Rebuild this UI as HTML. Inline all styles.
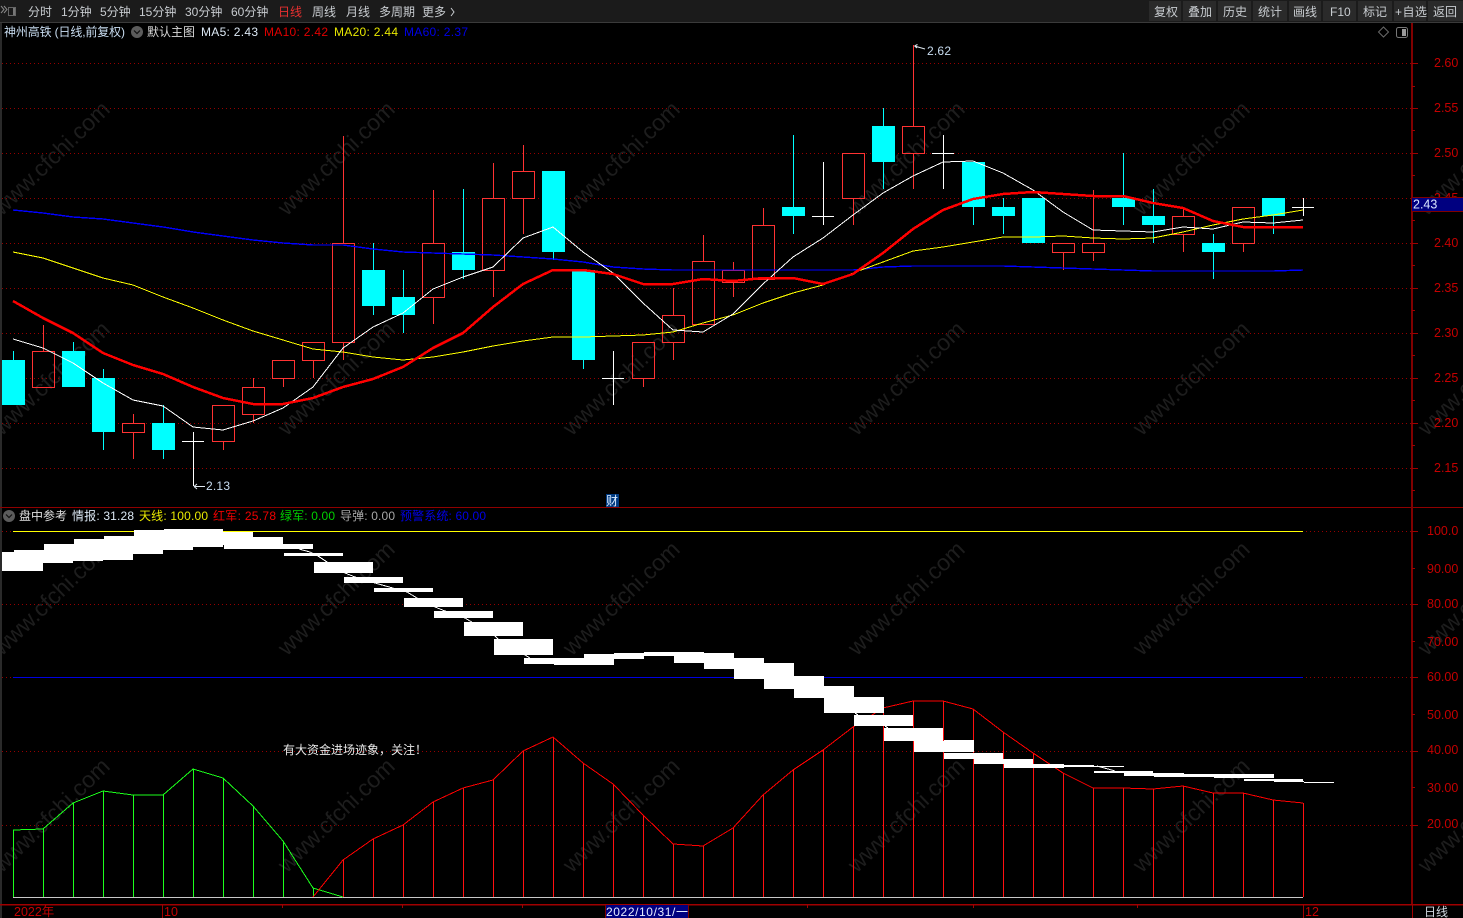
<!DOCTYPE html>
<html lang="zh">
<head>
<meta charset="utf-8">
<title>神州高铁</title>
<style>
html,body{margin:0;padding:0;background:#000;width:1463px;height:918px;overflow:hidden}
svg{display:block;position:absolute;left:0;top:0}
text{font-family:"Liberation Sans","Noto Sans CJK SC",sans-serif;font-size:12px;white-space:pre}
.wm text{font-size:23px;fill:#1d1d1d;text-anchor:middle}
.ax text{fill:#c40000;font-size:12.5px}
.crisp{shape-rendering:crispEdges}
</style>
</head>
<body>
<svg width="1463" height="918" viewBox="0 0 1463 918" xmlns="http://www.w3.org/2000/svg">
<rect width="1463" height="918" fill="#000"/>

<!-- watermark -->
<g class="wm">
<text transform="translate(51,158) rotate(-44)" y="8">www.cfchi.com</text>
<text transform="translate(336,158) rotate(-44)" y="8">www.cfchi.com</text>
<text transform="translate(621,158) rotate(-44)" y="8">www.cfchi.com</text>
<text transform="translate(906,158) rotate(-44)" y="8">www.cfchi.com</text>
<text transform="translate(1191,158) rotate(-44)" y="8">www.cfchi.com</text>
<text transform="translate(1476,158) rotate(-44)" y="8">www.cfchi.com</text>
<text transform="translate(51,378) rotate(-44)" y="8">www.cfchi.com</text>
<text transform="translate(336,378) rotate(-44)" y="8">www.cfchi.com</text>
<text transform="translate(621,378) rotate(-44)" y="8">www.cfchi.com</text>
<text transform="translate(906,378) rotate(-44)" y="8">www.cfchi.com</text>
<text transform="translate(1191,378) rotate(-44)" y="8">www.cfchi.com</text>
<text transform="translate(1476,378) rotate(-44)" y="8">www.cfchi.com</text>
<text transform="translate(51,598) rotate(-44)" y="8">www.cfchi.com</text>
<text transform="translate(336,598) rotate(-44)" y="8">www.cfchi.com</text>
<text transform="translate(621,598) rotate(-44)" y="8">www.cfchi.com</text>
<text transform="translate(906,598) rotate(-44)" y="8">www.cfchi.com</text>
<text transform="translate(1191,598) rotate(-44)" y="8">www.cfchi.com</text>
<text transform="translate(1476,598) rotate(-44)" y="8">www.cfchi.com</text>
<text transform="translate(51,815) rotate(-44)" y="8">www.cfchi.com</text>
<text transform="translate(336,815) rotate(-44)" y="8">www.cfchi.com</text>
<text transform="translate(621,815) rotate(-44)" y="8">www.cfchi.com</text>
<text transform="translate(906,815) rotate(-44)" y="8">www.cfchi.com</text>
<text transform="translate(1191,815) rotate(-44)" y="8">www.cfchi.com</text>
<text transform="translate(1476,815) rotate(-44)" y="8">www.cfchi.com</text>
</g>

<!-- grid -->
<path class="crisp" fill="none" stroke="#960000" stroke-width="1" stroke-dasharray="1 3" d="M2 63.5H1411M2 108.5H1411M2 153.5H1411M2 198.5H1411M2 243.5H1411M2 288.5H1411M2 333.5H1411M2 378.5H1411M2 423.5H1411M2 468.5H1411M2 531.5H1411M2 604.5H1411M2 677.5H1411M2 751.5H1411M2 825.5H1411"/>

<!-- cyan candles -->
<path class="crisp" fill="#00ffff" d="M2 360h23v45h-23zM62 351h23v36h-23zM92 378h23v54h-23zM152 423h23v27h-23zM362 270h23v36h-23zM392 297h23v18h-23zM452 252h23v18h-23zM542 171h23v81h-23zM572 270h23v90h-23zM782 207h23v9h-23zM872 126h23v36h-23zM962 162h23v45h-23zM992 207h23v9h-23zM1022 198h23v45h-23zM1112 198h23v9h-23zM1142 216h23v9h-23zM1202 243h23v9h-23zM1262 198h23v18h-23z"/>
<path class="crisp" fill="none" stroke="#00ffff" d="M13.5 351v9M73.5 342v9M103.5 369v9M103.5 432v18M163.5 405v18M163.5 450v9M373.5 243v27M373.5 306v9M403.5 270v27M403.5 315v18M463.5 189v63M463.5 270v9M553.5 252v8M583.5 360v9M793.5 135v72M793.5 216v18M883.5 108v18M883.5 162v27M973.5 207v18M1003.5 198v9M1003.5 216v18M1123.5 153v45M1123.5 207v18M1153.5 189v27M1153.5 225v18M1213.5 234v9M1213.5 252v27M1273.5 216v18"/>

<!-- red candles -->
<path class="crisp" fill="none" stroke="#ff3232" d="M32.5 351.5h22v36h-22zM43.5 325v26M122.5 423.5h22v9h-22zM133.5 414v9M133.5 433v26M212.5 405.5h22v36h-22zM223.5 442v8M242.5 387.5h22v27h-22zM253.5 378v9M253.5 415v8M272.5 360.5h22v18h-22zM283.5 379v8M302.5 342.5h22v18h-22zM313.5 361v17M332.5 243.5h22v99h-22zM343.5 136v107M343.5 343v17M422.5 243.5h22v54h-22zM433.5 190v53M433.5 298v26M482.5 198.5h22v72h-22zM493.5 163v35M493.5 271v26M512.5 171.5h22v27h-22zM523.5 145v26M523.5 199v35M632.5 342.5h22v36h-22zM643.5 379v8M662.5 315.5h22v27h-22zM673.5 288v27M673.5 343v17M692.5 261.5h22v63h-22zM703.5 235v26M722.5 270.5h22v12h-22zM733.5 262v8M733.5 283v14M752.5 225.5h22v54h-22zM763.5 208v17M842.5 153.5h22v45h-22zM853.5 199v26M902.5 126.5h22v27h-22zM913.5 45v81M913.5 154v35M1052.5 243.5h22v9h-22zM1063.5 253v17M1082.5 243.5h22v9h-22zM1093.5 190v53M1093.5 253v8M1172.5 216.5h22v18h-22zM1183.5 207v9M1183.5 235v17M1232.5 207.5h22v36h-22zM1243.5 244v8"/>

<!-- doji -->
<path class="crisp" fill="none" stroke="#fff" d="M182 441.5h22M193.5 432v54M602 378.5h22M613.5 351v54M812 216.5h22M823.5 162v63M932 153.5h22M943.5 135v54M1292 207.5h22M1303.5 198v18"/>

<!-- MA lines -->
<polyline class="crisp" fill="none" stroke="#0000ff" stroke-width="1.4" points="13,210 43,213 73,217 103,219 133,223 163,227 193,232 223,236 253,240 283,243 313,245 343,245 373,249 403,252 433,253 463,254 493,255 523,257 553,259 583,262 613,267 643,269 673,270 703,270 733,270 763,270 793,270 823,270 853,270 883,267 913,266 943,266 973,266 1003,266 1033,267 1063,268 1093,269 1123,270 1153,271 1183,271 1213,271 1243,271 1273,271 1303,270"/>
<polyline class="crisp" fill="none" stroke="#ffff00" stroke-width="1" points="13,252 43,258 73,268 103,278 133,285 163,297 193,308 223,320 253,331 283,340 313,349 343,352 373,357 403,360 433,357 463,352 493,346 523,341 553,337 583,337 613,336 643,335 673,332 703,323 733,315 763,303 793,293 823,285 853,273 883,262 913,251 943,247 973,242 1003,237 1033,237 1063,236 1093,238 1123,239 1153,238 1183,232 1213,225 1243,219 1273,215 1303,210"/>
<polyline class="crisp" fill="none" stroke="#ffffff" stroke-width="1" points="13,339 43,348 73,363 103,383 133,400 163,406 193,427 223,430 253,421 283,408 313,387 343,348 373,327 403,313 433,289 463,277 493,267 523,238 553,227 583,252 613,273 643,303 673,330 703,332 733,314 763,284 793,257 823,238 853,215 883,193 913,176 943,162 973,161 1003,173 1033,190 1063,212 1093,230 1123,231 1153,232 1183,227 1213,229 1243,222 1273,223 1303,220"/>
<polyline class="crisp" fill="none" stroke="#ff0000" stroke-width="2.5" stroke-linejoin="round" points="13,301 43,318 73,333 103,353 133,365 163,374 193,387 223,398 253,404 283,404 313,398 343,387 373,379 403,367 433,348 463,333 493,307 523,284 553,270 583,270 613,274 643,284 673,284 703,279 733,281 763,278 793,278 823,284 853,274 883,253 913,229 943,210 973,199 1003,194 1033,192 1063,194 1093,196 1123,196 1153,203 1183,208 1213,221 1243,227 1273,227 1303,227"/>

<!-- high/low markers -->
<path fill="none" stroke="#dfe8f0" stroke-width="1" d="M914.5 46L925 49M914.5 46l3-1.5M914.5 46l2.5 2"/>
<text x="927" y="55" fill="#c8dcf0" textLength="24">2.62</text>
<path class="crisp" fill="none" stroke="#dfe8f0" stroke-width="1" d="M194 486.5H205"/>
<path fill="none" stroke="#dfe8f0" stroke-width="1" d="M194 486.5l3-2.5M194 486.5l3 2.5"/>
<text x="206" y="490" fill="#c8dcf0" textLength="24">2.13</text>

<!-- 财 -->
<rect x="606" y="494" width="13" height="13" fill="#003a80"/>
<text x="606" y="505" fill="#dcecff">财</text>

<!-- lower panel: lines -->
<path class="crisp" d="M13 531.5H1303" stroke="#ffff00" fill="none"/>
<path class="crisp" d="M13 677.5H1303" stroke="#0000e0" fill="none"/>
<path class="crisp" d="M13 897.5H1303" stroke="#c8c8c8" fill="none"/>
<path class="crisp" fill="none" stroke="#1cff1c" d="M13.5 830V897M43.5 829V897M73.5 803V897M103.5 791V897M133.5 795V897M163.5 795V897M193.5 769V897M223.5 778V897M253.5 806V897M283.5 841V897M313.5 888V897"/>
<polyline class="crisp" fill="none" stroke="#1cff1c" points="13,830 43,829 73,803 103,791 133,795 163,795 193,769 223,778 253,806 283,841 313,888 343,897"/>
<path class="crisp" fill="none" stroke="#ff1010" d="M343.5 860V897M373.5 839V897M403.5 825V897M433.5 802V897M463.5 788V897M493.5 780V897M523.5 751V897M553.5 737V897M583.5 763V897M613.5 784V897M643.5 815V897M673.5 844V897M703.5 846V897M733.5 828V897M763.5 795V897M793.5 770V897M823.5 750V897M853.5 727V897M883.5 708V897M913.5 701V897M943.5 701V897M973.5 709V897M1003.5 732V897M1033.5 753V897M1063.5 773V897M1093.5 788V897M1123.5 788V897M1153.5 789V897M1183.5 786V897M1213.5 793V897M1243.5 793V897M1273.5 800V897M1303.5 803V897"/>
<polyline class="crisp" fill="none" stroke="#ff0000" points="313,897 343,860 373,839 403,825 433,802 463,788 493,780 523,751 553,737 583,763 613,784 643,815 673,844 703,846 733,828 763,795 793,770 823,750 853,727 883,708 913,701 943,701 973,709 1003,732 1033,753 1063,773 1093,788 1123,788 1153,789 1183,786 1213,793 1243,793 1273,800 1303,803"/>

<!-- white bars -->
<path class="crisp" fill="#fff" d="M2 552H43V571H2zM14 550h59v13h-59zM44 544h59v17h-59zM74 539h59v21h-59zM104 536h59v18h-59zM134 530h59v20h-59zM164 529h59v18h-59zM194 532h59v13h-59zM224 537h59v12h-59zM254 544h59v5h-59zM284 553h59v3h-59zM314 562h59v11h-59zM344 577h59v6h-59zM374 588h59v4h-59zM404 598h59v9h-59zM434 611h59v7h-59zM464 622h59v14h-59zM494 639h59v16h-59zM524 658h59v6h-59zM554 658h30v7h-30zM584 654h30v11h-30zM614 653h30v6h-30zM644 652h30v4h-30zM674 652h30v11h-30zM704 653h30v16h-30zM734 658h30v21h-30zM764 663h30v26h-30zM794 676h30v22h-30zM824 686h30v27h-30zM854 697h30v16h-30zM854 715h59v11h-59zM884 728h59v13h-59zM914 741h30v11h-30zM944 740h30v12h-30zM944 753h59v6h-59zM974 759h59v5h-59zM1004 764h30v4h-30zM1034 764h30v4h-30zM1064 765h30v2h-30zM1094 766h30v1h-30zM1094 771h59v2h-59zM1124 773h30v3h-30zM1154 773h30v4h-30zM1184 774h30v3h-30zM1214 774h30v4h-30zM1244 774h30v4h-30zM1244 779h59v2h-59zM1274 781h30v1h-30zM1304 782h30v1h-30z"/>
<polyline class="crisp" fill="none" stroke="#fff" points="299,549 310,552 318,556 327,562 345,573 355,577 375,583 407,592 417,598 435,607 445,611 465,618 470,621 495,636 498,639 525,655 530,658"/>
<path class="crisp" fill="none" stroke="#fff" d="M855 713l3 2M885 726l3 2M1097 766l11 3 7 2"/>

<!-- lower panel text message -->
<text x="283" y="754" fill="#e8e8e8">有大资金进场迹象，关注！</text>

<!-- axes -->
<rect x="0" y="22" width="2" height="896" fill="#2a2a2a"/>
<path class="crisp" fill="none" stroke="#900000" d="M0 507.5H1463"/>
<rect x="1411" y="22" width="2" height="882" fill="#800000"/>
<rect x="0" y="904" width="1463" height="1.5" fill="#a00000"/>
<path class="crisp" fill="none" stroke="#a00000" d="M1412 63.5h6M1412 86.5h3M1412 108.5h6M1412 130.5h3M1412 153.5h6M1412 175.5h3M1412 198.5h6M1412 220.5h3M1412 243.5h6M1412 265.5h3M1412 288.5h6M1412 310.5h3M1412 333.5h6M1412 355.5h3M1412 378.5h6M1412 400.5h3M1412 423.5h6M1412 445.5h3M1412 468.5h6M1412 490.5h3M1412 531.5h6M1412 568.5h3M1412 604.5h6M1412 641.5h3M1412 677.5h6M1412 714.5h3M1412 751.5h6M1412 787.5h3M1412 825.5h6M1412.5 905v13M162.5 905v13M1303.5 905v13M282.5 905v3M402.5 905v3M522.5 905v3M807.5 905v3M973.5 905v3M1137.5 905v3"/>
<g class="ax">
<text x="1434" y="67">2.60</text>
<text x="1434" y="112">2.55</text>
<text x="1434" y="157">2.50</text>
<text x="1434" y="202">2.45</text>
<text x="1434" y="247">2.40</text>
<text x="1434" y="292">2.35</text>
<text x="1434" y="337">2.30</text>
<text x="1434" y="382">2.25</text>
<text x="1434" y="427">2.20</text>
<text x="1434" y="472">2.15</text>
<text x="1427" y="535">100.0</text>
<text x="1427" y="573">90.00</text>
<text x="1427" y="608">80.00</text>
<text x="1427" y="646">70.00</text>
<text x="1427" y="681">60.00</text>
<text x="1427" y="719">50.00</text>
<text x="1427" y="754">40.00</text>
<text x="1427" y="792">30.00</text>
<text x="1427" y="828">20.00</text>
<text x="14" y="916">2022年</text>
<text x="164" y="916">10</text>
<text x="1305" y="916">12</text>
</g>

<!-- current price box -->
<rect x="1412" y="197" width="51" height="15" fill="#000080"/>
<path class="crisp" fill="none" stroke="#800000" d="M1412 197.5H1463M1412 211.5H1463"/>
<text x="1413" y="208.5" fill="#d8e4ff" style="font-size:12.5px">2.43</text>

<!-- date box -->
<rect x="605" y="905" width="84" height="13" fill="#000080"/>
<path class="crisp" fill="none" stroke="#800000" d="M605.5 905v13M688.5 905v13"/>
<text x="606" y="916" fill="#e4ecff" textLength="82">2022/10/31/一</text>
<text x="1424" y="916" fill="#d0d8e0">日线</text>

<!-- top bar -->
<rect x="0" y="0" width="1463" height="22" fill="#1b1b1b"/>
<path class="crisp" d="M0 22.5H1463" stroke="#3a3a3a" fill="none"/>
<g fill="none" stroke="#8a8a8a">
<path d="M1 6l3 3.5-3 3.5M4 6l3 3.5-3 3.5" stroke-width="1"/>
<path class="crisp" d="M8.5 7.5h7v8h-7z" stroke="#666"/>
</g>
<rect x="13" y="8" width="2" height="7" fill="#777"/>
<g fill="#c8ccd0">
<text x="28" y="16">分时</text>
<text x="61" y="16">1分钟</text>
<text x="100" y="16">5分钟</text>
<text x="139" y="16">15分钟</text>
<text x="185" y="16">30分钟</text>
<text x="231" y="16">60分钟</text>
<text x="278" y="16" fill="#e83030">日线</text>
<text x="312" y="16">周线</text>
<text x="346" y="16">月线</text>
<text x="379" y="16">多周期</text>
<text x="422" y="16">更多</text>
</g>
<path d="M451 8l3 4-3 4" fill="none" stroke="#c8ccd0" stroke-width="1"/>

<g class="crisp" fill="#2a2a2a">
<rect x="1149" y="1" width="32" height="20"/>
<rect x="1183" y="1" width="33" height="20"/>
<rect x="1218" y="1" width="33" height="20"/>
<rect x="1253" y="1" width="34" height="20"/>
<rect x="1289" y="1" width="32" height="20"/>
<rect x="1323" y="1" width="33" height="20"/>
<rect x="1358" y="1" width="34" height="20"/>
<rect x="1394" y="1" width="32" height="20"/>
<rect x="1428" y="1" width="35" height="20"/>
</g>
<g fill="#c8ccd0">
<text x="1154" y="16">复权</text>
<text x="1188" y="16">叠加</text>
<text x="1223" y="16">历史</text>
<text x="1258" y="16">统计</text>
<text x="1293" y="16">画线</text>
<text x="1330" y="16">F10</text>
<text x="1363" y="16">标记</text>
<text x="1395" y="16" textLength="32">+自选</text>
<text x="1433" y="16">返回</text>
</g>

<!-- title row -->
<text x="4" y="36" fill="#c8dcf0" textLength="121">神州高铁 (日线,前复权)</text>
<circle cx="137" cy="32" r="6" fill="#5c5c5c"/>
<path d="M134 30.5l3 3 3-3" fill="none" stroke="#111" stroke-width="1.2"/>
<text x="147" y="36" fill="#d8d8d8">默认主图</text>
<text x="201" y="36" fill="#dce8f4" textLength="57">MA5: 2.43</text>
<text x="264" y="36" fill="#e00000" textLength="64">MA10: 2.42</text>
<text x="334" y="36" fill="#e8e800" textLength="64">MA20: 2.44</text>
<text x="404" y="36" fill="#0000e6" textLength="64">MA60: 2.37</text>
<path d="M1383.5 27l5 5-5 5-5-5z" fill="none" stroke="#6a6a6a"/>
<rect x="1396.5" y="27.5" width="11" height="10" rx="2" fill="none" stroke="#777"/>
<rect x="1402" y="29" width="4" height="7" fill="#999"/>

<!-- lower title row -->
<circle cx="9" cy="516" r="6" fill="#5c5c5c"/>
<path d="M6 514.5l3 3 3-3" fill="none" stroke="#111" stroke-width="1.2"/>
<text x="19" y="520" fill="#e0e0e0">盘中参考</text>
<text x="72" y="520" fill="#dce8f4" textLength="62">情报: 31.28</text>
<text x="139" y="520" fill="#e8e800" textLength="69">天线: 100.00</text>
<text x="213" y="520" fill="#f00000" textLength="63">红军: 25.78</text>
<text x="280" y="520" fill="#00d000" textLength="55">绿军: 0.00</text>
<text x="340" y="520" fill="#a8a8a8" textLength="55">导弹: 0.00</text>
<text x="400" y="520" fill="#0000e6" textLength="86">预警系统: 60.00</text>
</svg>
</body>
</html>
